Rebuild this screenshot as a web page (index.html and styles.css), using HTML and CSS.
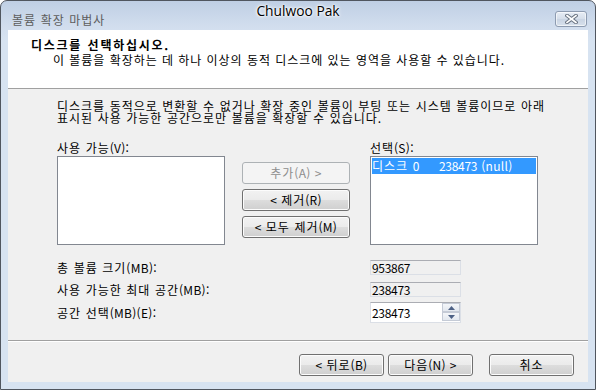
FILE: index.html
```html
<!DOCTYPE html>
<html lang="ko">
<head>
<meta charset="utf-8">
<title>볼륨 확장 마법사</title>
<link rel="stylesheet" href="styles.css">
</head>
<body>
<div class="window">
  <div class="titlebar">
    <span class="app-title">볼륨 확장 마법사</span>
    <span class="owner">Chulwoo Pak</span>
    <button class="close" aria-label="닫기">
      <svg width="13" height="10" viewBox="0 0 13 10">
        <path d="M2 1.5 L11 8.5 M11 1.5 L2 8.5" stroke="#6a7482" stroke-width="3.6" stroke-linecap="square" fill="none"/>
        <path d="M2 1.5 L11 8.5 M11 1.5 L2 8.5" stroke="#ffffff" stroke-width="1.6" stroke-linecap="square" fill="none"/>
      </svg>
    </button>
  </div>
  <div class="client">
    <header class="wiz-head">
      <h1>디스크를 선택하십시오.</h1>
      <p>이 볼륨을 확장하는 데 하나 이상의 동적 디스크에 있는 영역을 사용할 수 있습니다.</p>
    </header>
    <main class="wiz-body">
      <p class="desc">디스크를 동적으로 변환할 수 없거나 확장 중인 볼륨이 부팅 또는 시스템 볼륨이므로 아래<br>표시된 사용 가능한 공간으로만 볼륨을 확장할 수 있습니다.</p>
      <div class="picker">
        <div class="col">
          <label class="lbl">사용 가능<span class="en">(V):</span></label>
          <div class="listbox"></div>
        </div>
        <div class="movers">
          <button class="btn mover" disabled>추가<span class="en">(A) &gt;</span></button>
          <button class="btn mover"><span class="en">&lt; </span>제거<span class="en">(R)</span></button>
          <button class="btn mover"><span class="en">&lt; </span>모두 제거<span class="en">(M)</span></button>
        </div>
        <div class="col">
          <label class="lbl">선택<span class="en">(S):</span></label>
          <div class="listbox">
            <div class="item selected"><span class="disk">디스크 0</span><span class="num">238473</span><span class="en"> (null)</span></div>
          </div>
        </div>
      </div>
      <div class="sizes">
        <span class="lbl">총 볼륨 크기<span class="en">(MB):</span></span>
        <span class="field readonly num">953867</span>
        <span class="lbl">사용 가능한 최대 공간<span class="en">(MB):</span></span>
        <span class="field readonly num">238473</span>
        <span class="lbl last-row">공간 선택<span class="en">(MB)(E):</span></span>
        <span class="field spin last-row">
          <span class="spin-val num">238473</span>
          <span class="spin-btns">
            <span class="spin-btn"><svg width="7" height="4" viewBox="0 0 7 4"><path d="M0 4 L3.5 0 L7 4 Z" fill="#4d6185"/></svg></span>
            <span class="spin-btn"><svg width="7" height="4" viewBox="0 0 7 4"><path d="M0 0 L3.5 4 L7 0 Z" fill="#4d6185"/></svg></span>
          </span>
        </span>
      </div>
    </main>
    <footer class="wiz-foot">
      <button class="btn nav"><span class="en">&lt; </span>뒤로<span class="en">(B)</span></button>
      <button class="btn nav">다음<span class="en">(N) &gt;</span></button>
      <button class="btn nav cancel">취소</button>
    </footer>
  </div>
</div>
</body>
</html>
```

FILE: styles.css
```css
* { box-sizing: border-box; }
html, body { margin: 0; padding: 0; background: #ffffff; }
body {
  font-family: "Noto Sans CJK KR", "Noto Sans", sans-serif;
  font-size: 12px;
  line-height: 12px;
  letter-spacing: 0.96px;
  word-spacing: 0.35px;
  color: #000;
}
.window {
  width: 596px;
  height: 390px;
  border: 1px solid #50565f;
  border-radius: 7px 7px 0 0;
  background: linear-gradient(#bfcfe4 0px, #d2deee 26px, #d7e3f1 40px, #d7e3f1 100%);
  display: flex;
  flex-direction: column;
  overflow: hidden;
}
.titlebar {
  height: 29px;
  display: grid;
  grid-template-columns: 1fr auto 1fr;
  flex: none;
}
.app-title {
  align-self: end;
  padding: 0 0 4px 11px;
  color: #5d5d5d;
  white-space: nowrap;
}
.owner {
  align-self: start;
  padding-top: 3px;
  font-family: "Open Sans", "Noto Sans", sans-serif;
  font-size: 13.8px;
  line-height: 14px;
  letter-spacing: 0;
  word-spacing: 0;
  color: #000;
  text-shadow: 0 0 5px #ffffff, 0 0 3px #ffffff, 0 0 2px #ffffff;
}
.close {
  justify-self: end;
  align-self: start;
  margin: 10px 8px 0 0;
  width: 32px;
  height: 16px;
  padding: 0;
  border: 1px solid #8d9bb0;
  border-radius: 3px;
  background: linear-gradient(#e7edf5, #d5deea 50%, #c9d4e3 51%, #d8e1ec);
  box-shadow: inset 0 0 0 1px rgba(255,255,255,0.6);
  display: flex;
  align-items: center;
  justify-content: center;
}
.client {
  flex: 1;
  margin: 0 7px 7px 7px;
  display: flex;
  flex-direction: column;
  background: #f0f0f0;
}
.wiz-head {
  height: 59px;
  background: #ffffff;
  border-bottom: 1px solid #a0a0a0;
  padding: 9px 0 0 23px;
  flex: none;
}
.wiz-head h1 {
  margin: 0;
  font-size: 12px;
  line-height: 12px;
  font-weight: bold;
  letter-spacing: 1.75px;
  white-space: nowrap;
}
.wiz-head p {
  margin: 3px 0 0 22px;
  white-space: nowrap;
  word-spacing: 0;
}
.wiz-body {
  flex: 1;
  padding: 11px 0 0 49px;
  display: flex;
  flex-direction: column;
}
.desc {
  margin: 0;
  white-space: nowrap;
}
.picker {
  margin-top: 18px;
  display: flex;
  align-items: flex-start;
}
.col {
  display: flex;
  flex-direction: column;
  width: 168px;
}
.lbl { white-space: nowrap; }
.col .lbl { height: 14px; }
.en { letter-spacing: 0.3px; }
.num { letter-spacing: -0.3px; }
.listbox {
  height: 89px;
  border: 1px solid #828790;
  background: #ffffff;
  padding: 1px;
}
.item {
  height: 16px;
  line-height: 16px;
  color: #fff;
  white-space: nowrap;
}
.item.selected { background: #3399ff; }
.disk { display: inline-block; width: 67px; }
.movers {
  margin: 20px 20px 0 17px;
  display: flex;
  flex-direction: column;
  gap: 5px;
}
.btn {
  font: inherit;
  font-size: 12px;
  line-height: 12px;
  letter-spacing: 0.96px;
  word-spacing: 0.35px;
  color: #000;
  height: 22px;
  padding: 0;
  border: 1px solid #707070;
  border-radius: 3px;
  background: linear-gradient(#f2f2f2, #ebebeb 50%, #dddddd 51%, #cfcfcf);
  box-shadow: inset 0 0 0 1px #fcfcfc;
  white-space: nowrap;
}
.btn:disabled {
  color: #8d8d8d;
  border-color: #adb2b5;
  background: #f4f4f4;
  box-shadow: none;
}
.mover { width: 108px; }
.sizes {
  margin-top: 15px;
  display: grid;
  grid-template-columns: 313px 91px;
  grid-template-rows: 15px 15px 21px;
  row-gap: 7px;
  align-items: center;
}
.last-row { margin-top: -4px; }
.field {
  height: 15px;
  border: 1px solid #dbdfe6;
  border-top-color: #abadb3;
  padding-left: 1px;
  line-height: 13px;
  display: flex;
  align-items: center;
}
.readonly { background: #f0f0f0; }
.spin {
  height: 21px;
  background: #ffffff;
  padding-left: 1px;
  justify-content: space-between;
  align-items: stretch;
}
.spin-val { align-self: center; }
.spin-btns {
  width: 18px;
  display: flex;
  flex-direction: column;
  padding: 0 0 1px 0;
}
.spin-btn {
  flex: 1;
  display: flex;
  align-items: center;
  justify-content: center;
  border: 1px solid #c5cbd6;
  background: linear-gradient(#f4f6f9, #e3e8ef);
}
.wiz-foot {
  height: 42px;
  flex: none;
  border-top: 1px solid #a0a0a0;
  box-shadow: inset 0 1px 0 #ffffff;
  padding: 13px 14px 0 0;
  display: flex;
  justify-content: flex-end;
  align-items: flex-start;
  gap: 4px;
}
.nav { width: 85px; }
.cancel { margin-left: 12px; }
```
